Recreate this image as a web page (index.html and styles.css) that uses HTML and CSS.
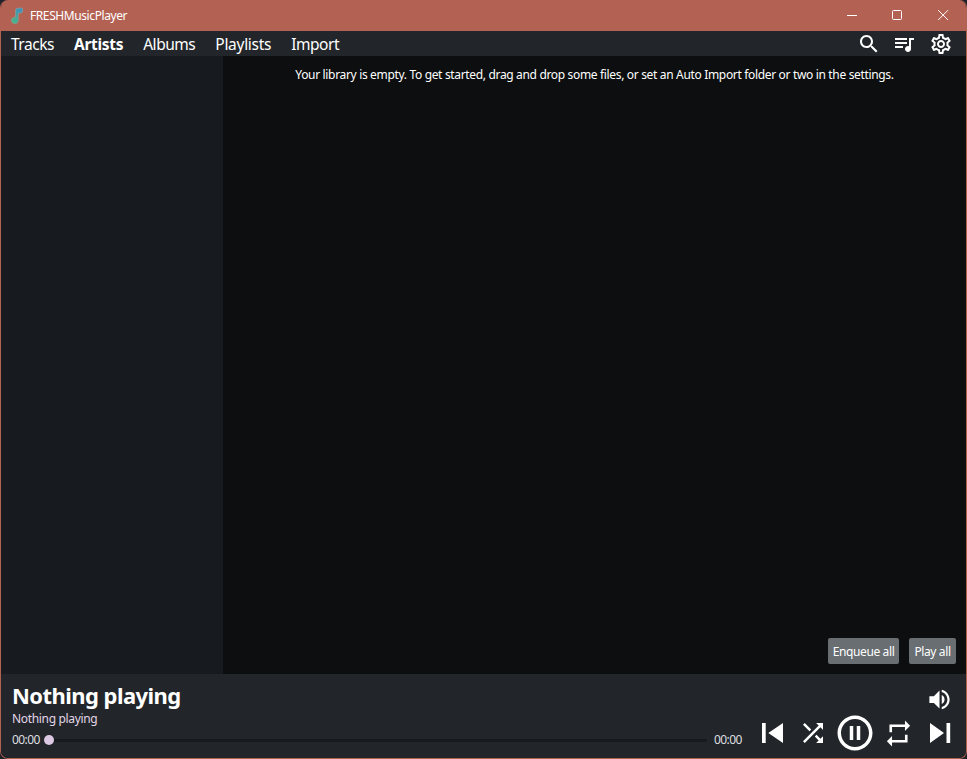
FILE: index.html
```html
<!DOCTYPE html>
<html lang="en">
<head>
<meta charset="utf-8">
<title>FRESHMusicPlayer</title>
<link rel="stylesheet" href="styles.css">
</head>
<body>
<div class="window">
  <header class="titlebar">
    <svg class="logo" width="14" height="18" viewBox="0 0 14 18">
      <defs><linearGradient id="note" x1="0" y1="1" x2="0.6" y2="0"><stop offset="0" stop-color="#4fba7c"/><stop offset="1" stop-color="#3d93bf"/></linearGradient></defs>
      <path d="M5.500 3.200Q5.600 1.400 7.400 1.300L11.400 1Q12.600 1 12.500 2V4.600Q12.400 5.800 11.200 5.900L8.300 6.200V13.200A3.500 3.300 0 1 1 5.500 10.200Z" fill="url(#note)" stroke="#8d9a94" stroke-width="0.8"/>
    </svg>
    <span class="app-name">FRESHMusicPlayer</span>
    <div class="caption">
      <svg width="46" height="31" viewBox="0 0 46 31"><path d="M18 15.5h10"/></svg>
      <svg width="46" height="31" viewBox="0 0 46 31"><rect x="17.5" y="10.5" width="9" height="9" rx="1"/></svg>
      <svg width="46" height="31" viewBox="0 0 46 31"><path d="M17.2 10.2l9.8 9.8M27 10.2l-9.8 9.8"/></svg>
    </div>
  </header>
  <nav class="menu">
    <a class="tab">Tracks</a>
    <a class="tab active">Artists</a>
    <a class="tab">Albums</a>
    <a class="tab wide">Playlists</a>
    <a class="tab">Import</a>
    <div class="tools">
      <svg class="search" width="24" height="24" viewBox="0 0 24 24"><path d="M15.5 14h-.79l-.28-.27C15.41 12.59 16 11.11 16 9.5 16 5.91 13.09 3 9.5 3S3 5.91 3 9.5 5.91 16 9.5 16c1.61 0 3.09-.59 4.23-1.57l.27.28v.79l5 4.99L20.49 19l-4.99-5zm-6 0C7.01 14 5 11.99 5 9.5S7.01 5 9.5 5 14 7.01 14 9.5 11.99 14 9.5 14z"/></svg>
      <svg width="24" height="24" viewBox="0 0 24 24"><path d="M15 6H3v2h12V6zm0 4H3v2h12v-2zM3 16h8v-2H3v2zM17 6v8.18c-.31-.11-.65-.18-1-.18-1.66 0-3 1.34-3 3s1.34 3 3 3 3-1.34 3-3V8h3V6h-5z"/></svg>
      <svg width="24" height="24" viewBox="0 0 24 24"><path d="M19.43 12.98c.04-.32.07-.64.07-.98 0-.34-.03-.66-.07-.98l2.11-1.65c.19-.15.24-.42.12-.64l-2-3.46c-.09-.16-.26-.25-.44-.25-.06 0-.12.01-.17.03l-2.49 1c-.52-.4-1.08-.73-1.69-.98l-.38-2.65C14.46 2.18 14.25 2 14 2h-4c-.25 0-.46.18-.49.42l-.38 2.65c-.61.25-1.17.59-1.69.98l-2.49-1c-.06-.02-.12-.03-.18-.03-.17 0-.34.09-.43.25l-2 3.46c-.13.22-.07.49.12.64l2.11 1.65c-.04.32-.07.65-.07.98 0 .33.03.66.07.98l-2.11 1.65c-.19.15-.24.42-.12.64l2 3.46c.09.16.26.25.44.25.06 0 .12-.01.17-.03l2.49-1c.52.4 1.08.73 1.69.98l.38 2.65c.03.24.24.42.49.42h4c.25 0 .46-.18.49-.42l.38-2.65c.61-.25 1.17-.59 1.69-.98l2.49 1c.06.02.12.03.18.03.17 0 .34-.09.43-.25l2-3.46c.12-.22.07-.49-.12-.64l-2.11-1.65zm-1.98-1.71c.04.31.05.52.05.73 0 .21-.02.43-.05.73l-.14 1.13.89.7 1.08.84-.7 1.21-1.27-.51-1.04-.42-.9.68c-.43.32-.84.56-1.25.73l-1.06.43-.16 1.13-.2 1.35h-1.4l-.19-1.35-.16-1.13-1.06-.43c-.43-.18-.83-.41-1.23-.71l-.91-.7-1.06.43-1.27.51-.7-1.21 1.08-.84.89-.7-.14-1.13c-.03-.31-.05-.54-.05-.74s.02-.43.05-.73l.14-1.13-.89-.7-1.08-.84.7-1.21 1.27.51 1.04.42.9-.68c.43-.32.84-.56 1.25-.73l1.06-.43.16-1.13.2-1.35h1.39l.19 1.35.16 1.13 1.06.43c.43.18.83.41 1.23.71l.91.7 1.06-.43 1.27-.51.7 1.21-1.07.85-.89.7.14 1.13zM12 8c-2.21 0-4 1.79-4 4s1.79 4 4 4 4-1.79 4-4-1.79-4-4-4zm0 6c-1.1 0-2-.9-2-2s.9-2 2-2 2 .9 2 2-.9 2-2 2z"/></svg>
    </div>
  </nav>
  <main class="content">
    <aside class="sidebar"></aside>
    <section class="library">
      <p class="empty">Your library is empty. To get started, drag and drop some files, or set an Auto Import folder or two in the settings.</p>
      <div class="actions">
        <button class="enqueue">Enqueue all</button>
        <button class="play">Play all</button>
      </div>
    </section>
  </main>
  <footer class="player">
    <div class="now">
      <h1 class="song">Nothing playing</h1>
      <p class="artist">Nothing playing</p>
      <div class="progress">
        <span class="time">00:00</span>
        <div class="slider"><i class="thumb"></i><i class="track"></i></div>
        <span class="time">00:00</span>
      </div>
    </div>
    <div class="side">
      <svg class="volume" width="27" height="27" viewBox="0 0 24 24"><path d="M3 9v6h4l5 5V4L7 9H3zm13.5 3c0-1.77-1.02-3.29-2.5-4.03v8.05c1.48-.73 2.5-2.25 2.5-4.02zM14 3.23v2.06c2.89.86 5 3.54 5 6.71s-2.11 5.85-5 6.71v2.06c4.01-.91 7-4.49 7-8.77s-2.99-7.86-7-8.77z"/></svg>
      <div class="controls">
        <svg width="21" height="20" viewBox="0 0 21 20"><path d="M0 0h3.7v20H0zM6.3 10L21 0v20z"/></svg>
        <svg class="shuffle" width="30" height="30" viewBox="0 0 24 24"><path d="M10.59 9.17L5.41 4 4 5.41l5.17 5.17 1.42-1.41zM14.5 4l2.04 2.04L4 18.59 5.41 20 17.96 7.46 20 9.5V4h-5.5zm.33 9.41l-1.41 1.41 3.13 3.13L14.5 20H20v-5.5l-2.04 2.04-3.13-3.13z"/></svg>
        <svg class="pause" width="42" height="42" viewBox="0 0 24 24"><path d="M9 16h2V8H9v8zm3-14C6.48 2 2 6.48 2 12s4.48 10 10 10 10-4.48 10-10S17.520 2 12 2zm0 18c-4.410 0-8-3.590-8-8s3.590-8 8-8 8 3.590 8 8-3.590 8-8 8zm1-4h2V8h-2v8z"/></svg>
        <svg class="repeat" width="31" height="31" viewBox="0 0 24 24"><path d="M7 7h10v3l4-4-4-4v3H5v6h2V7zm10 10H7v-3l-4 4 4 4v-3h12v-6h-2v4z"/></svg>
        <svg class="next" width="21" height="20" viewBox="0 0 21 20"><path d="M0 0L14 10 0 20zM16.500 0h3.700v20h-3.700z"/></svg>
      </div>
    </div>
  </footer>
</div>
</body>
</html>
```
FILE: styles.css
```css
* { box-sizing: border-box; }
body { margin: 0; background: #20222a; color: #fff; font: 12px/16px "Noto Sans", "Open Sans", sans-serif; }
svg { display: block; flex: none; fill: #fff; }
h1, p { margin: 0; white-space: nowrap; }
.window { height: 759px; display: flex; flex-direction: column; border: 1px solid #b36153; border-top: 0; border-radius: 8px; overflow: hidden; background: #22262a; }

.titlebar { height: 31px; flex: none; display: flex; align-items: center; padding-left: 9px; background: #b36153; }
.app-name { margin-left: 6px; letter-spacing: -0.41px; }
.caption { display: flex; margin: 0 -1px 0 auto; }
.caption svg { fill: none; stroke: #fff; stroke-width: 1; }

.menu { height: 25px; flex: none; display: flex; align-items: center; padding: 0 13px 0 10px; font-size: 15.5px; line-height: 23px; background: #22262a; }
.tab { margin-right: 20px; padding-top: 2px; letter-spacing: -0.47px; }
.active { letter-spacing: -0.3px; font-weight: 700; }
.wide { letter-spacing: -0.28px; }
.tools { display: flex; gap: 13px; margin-left: auto; }
.search { margin-right: -2px; }

.content { flex: 1; display: flex; }
.sidebar { width: 222px; background: #171a1e; }
.library { flex: 1; display: flex; flex-direction: column; justify-content: space-between; padding: 11px 10px 10px; background: #0c0e0f; }
.empty { text-align: center; letter-spacing: -0.335px; }
.actions { display: flex; justify-content: flex-end; gap: 10px; }
button { height: 26px; padding: 1px 0 0; border: 0; border-radius: 2px; background: #686e71; color: #fff; font: inherit; letter-spacing: -0.38px; }
.enqueue { width: 71px; }
.play { width: 47px; }

.player { height: 84px; flex: none; display: flex; justify-content: space-between; background: #22262a; }
.now { width: 742px; padding: 6px 0 0 11px; }
.song { font-size: 22px; line-height: 30px; font-weight: 700; letter-spacing: -0.55px; }
.artist { line-height: 17px; color: #e2d5e8; letter-spacing: -0.33px; }
.progress { display: flex; align-items: center; margin-top: 5px; color: #dedfe0; line-height: 16px; }
.time { width: 29px; letter-spacing: -0.6px; }
.slider { flex: 1; display: flex; align-items: center; margin: 0 7px 0 3px; }
.thumb { width: 10px; height: 10px; border-radius: 50%; background: #dcc8e4; }
.track { flex: 1; height: 3px; background: #171a1e; }
.side { width: 204px; padding-top: 12px; }
.volume { margin-left: 164px; }
.controls { display: flex; align-items: center; height: 42px; margin-top: -1px; }
.shuffle { margin-left: 14.5px; }
.pause { margin-left: 6.5px; }
.repeat { margin-left: 7px; }
.next { margin-left: 16px; }
```
